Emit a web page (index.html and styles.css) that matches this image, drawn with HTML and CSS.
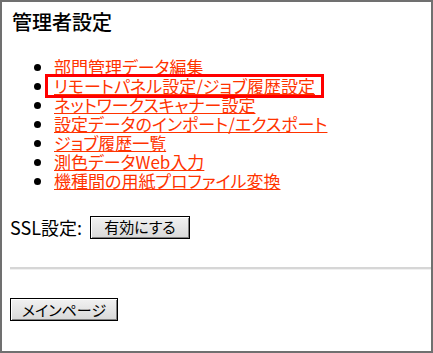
FILE: index.html
```html
<!DOCTYPE html>
<html lang="ja">
<head>
<meta charset="utf-8">
<title>管理者設定</title>
<link rel="stylesheet" href="styles.css">
</head>
<body>
<div class="frame">
  <h1 class="title">管理者設定</h1>
  <ul class="menu">
    <li><a href="#">部門管理データ編集</a></li>
    <li class="marked"><a href="#">リモートパネル設定/ジョブ履歴設定</a></li>
    <li><a href="#">ネットワークスキャナー設定</a></li>
    <li><a href="#">設定データのインポート/エクスポート</a></li>
    <li><a href="#">ジョブ履歴一覧</a></li>
    <li><a href="#">測色データWeb入力</a></li>
    <li><a href="#">機種間の用紙プロファイル変換</a></li>
  </ul>
  <div class="ssl">
    <span class="ssl-label">SSL設定:</span>
    <button class="btn btn-ssl" type="button">有効にする</button>
  </div>
  <hr class="rule">
  <button class="btn btn-main" type="button">メインページ</button>
</div>
</body>
</html>
```

FILE: styles.css
```css
html, body {
  margin: 0;
  padding: 0;
  background: #ffffff;
}
body {
  font-family: "Noto Sans CJK JP", "Liberation Sans", sans-serif;
  color: #000;
}
.frame {
  box-sizing: border-box;
  width: 433px;
  height: 353px;
  border: 2px solid #707070;
  padding: 8px 0 0 8px;
  overflow: hidden;
}
.title {
  margin: 0;
  font-size: 20px;
  font-weight: 500;
  line-height: 24px;
  padding-left: 2px;
}
.menu {
  margin: 23px 0 0 0;
  padding: 0 0 0 44px;
  list-style: disc;
  font-feature-settings: "palt";
}
.menu li {
  font-size: 17px;
  line-height: 19px;
  height: 19px;
}
.menu a {
  color: #ff3300;
  text-decoration: underline;
  text-underline-offset: 1px;
}
.menu li.marked a {
  display: inline-block;
  line-height: 17px;
  outline: 3px solid #ff0000;
  outline-offset: 0;
  padding: 0 6px 1px 6px;
  margin-left: -6px;
}
.ssl {
  display: flex;
  align-items: center;
  gap: 8px;
  margin-top: 24px;
}
.ssl-label {
  font-size: 18px;
  font-feature-settings: "palt";
}
.btn {
  box-sizing: border-box;
  font-family: "Noto Sans CJK JP", sans-serif;
  font-size: 15px;
  font-feature-settings: "palt";
  color: #000;
  background: linear-gradient(#f2f2f2, #d8d8d8);
  border: 1px solid #000;
  box-shadow: inset 1px 1px 0 #ffffff, inset -1px -1px 0 #808080;
  padding: 0;
  line-height: 18px;
}
.btn-ssl {
  width: 100px;
  height: 23px;
}
.rule {
  margin: 27px 0 0 0;
  border: 0;
  border-top: 2px solid #d6d6d6;
  border-bottom: 1px solid #f0f0f0;
  height: 0;
}
.btn-main {
  display: block;
  margin-top: 28px;
  width: 108px;
  height: 23px;
}
```
